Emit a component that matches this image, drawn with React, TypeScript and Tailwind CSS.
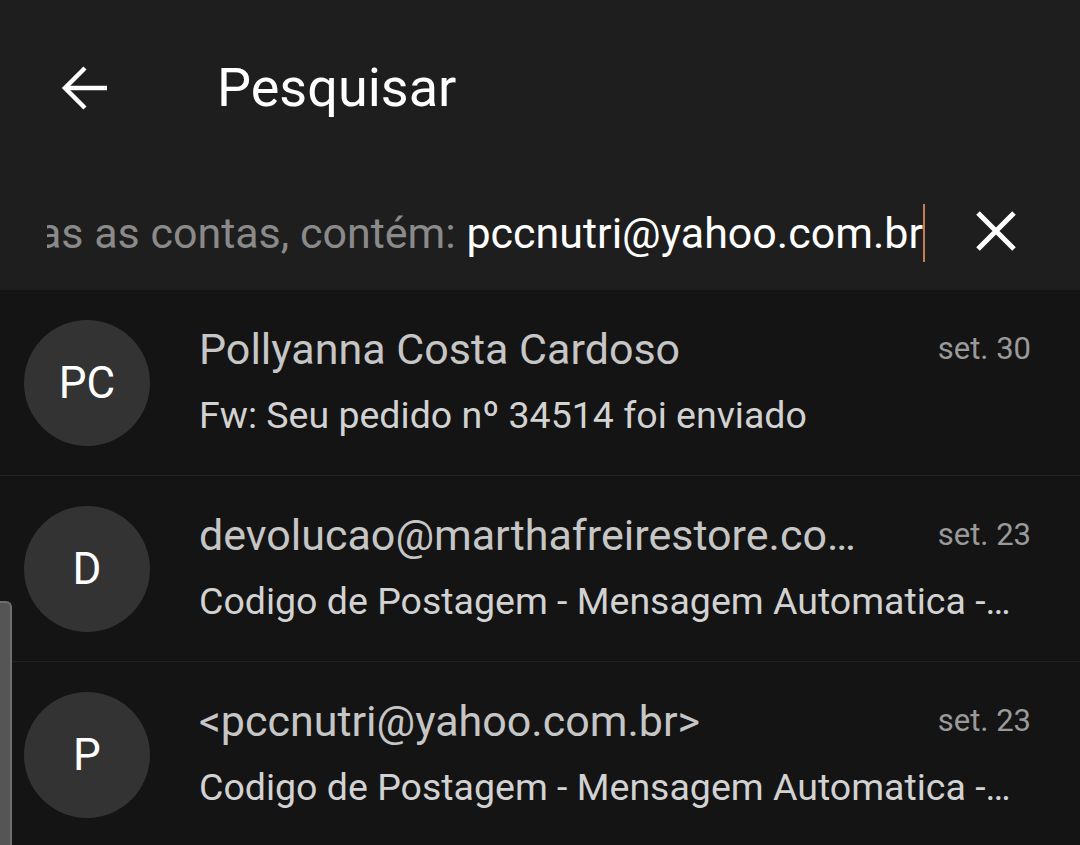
import React from 'react';

const rows = [
  { initials: 'PC', name: 'Pollyanna Costa Cardoso', subject: 'Fw: Seu pedido nº 34514 foi enviado', date: 'set. 30' },
  { initials: 'D', name: 'devolucao@marthafreirestore.co…', subject: 'Codigo de Postagem - Mensagem Automatica -…', date: 'set. 23' },
  { initials: 'P', name: '<pccnutri@yahoo.com.br>', subject: 'Codigo de Postagem - Mensagem Automatica -…', date: 'set. 23' },
];

function BackArrow() {
  return (
    <svg width="48" height="48" viewBox="0 0 48 48" fill="none" stroke="white" strokeWidth="4.5">
      <path d="M47 24H5" />
      <path d="M25 4 5 24l20 20" />
    </svg>
  );
}

function CloseIcon() {
  return (
    <svg width="42" height="42" viewBox="0 0 42 42" fill="none" stroke="white" strokeWidth="5">
      <path d="M3 3l36 36M39 3 3 39" />
    </svg>
  );
}

export default function App() {
  return (
    <div className="relative w-[1080px] h-[845px] overflow-hidden bg-[#141414]" style={{ fontFamily: 'Roboto, "Noto Sans", sans-serif' }}>
      <div className="h-[290px] bg-[#1e1e1e]">
        <div className="h-[176px] flex items-center">
          <div className="ml-[60px] w-[48px] h-[48px]">
            <BackArrow />
          </div>
          <div className="ml-[109px] text-[54px] text-white leading-none">Pesquisar</div>
        </div>
        <div className="h-[114px] flex items-center">
          <div className="ml-[47px] w-[878px] overflow-hidden flex justify-end items-center whitespace-nowrap">
            <span className="text-[43px] text-[#8a8a8a] leading-none">Em todas as contas, contém:&nbsp;</span>
            <span className="text-[43px] text-white leading-none">pccnutri@yahoo.com.br</span>
            <span className="w-[2px] h-[58px] bg-[#c57d56] shrink-0" />
          </div>
          <div className="ml-[50px] w-[42px] h-[42px] -mt-[4px]">
            <CloseIcon />
          </div>
        </div>
      </div>
      <div>
        {rows.map((r, i) => (
          <div key={i} className="h-[186px] flex items-center border-b border-[#222222]">
            <div className="ml-[24px] w-[126px] h-[126px] rounded-full bg-[#333333] flex items-center justify-center text-white text-[44px] shrink-0">
              {r.initials}
            </div>
            <div className="ml-[49px] flex-1 min-w-0 pr-[49px]">
              <div className="flex items-center h-[66px]">
                <div className="flex-1 min-w-0 whitespace-nowrap text-[43px] text-[#c6c6c6]">{r.name}</div>
                <div className="ml-[20px] text-[31px] text-[#9a9a9a] shrink-0">{r.date}</div>
              </div>
              <div className="h-[66px] flex items-center">
                <div className="whitespace-nowrap text-[37.5px] text-[#d2d2d2]">{r.subject}</div>
              </div>
            </div>
          </div>
        ))}
      </div>
      <div className="absolute left-0 top-[601px] w-[12px] h-[260px] bg-[#555555] border-r-2 border-t-2 border-[#6e6e6e] rounded-tr-[6px]" />
    </div>
  );
}
